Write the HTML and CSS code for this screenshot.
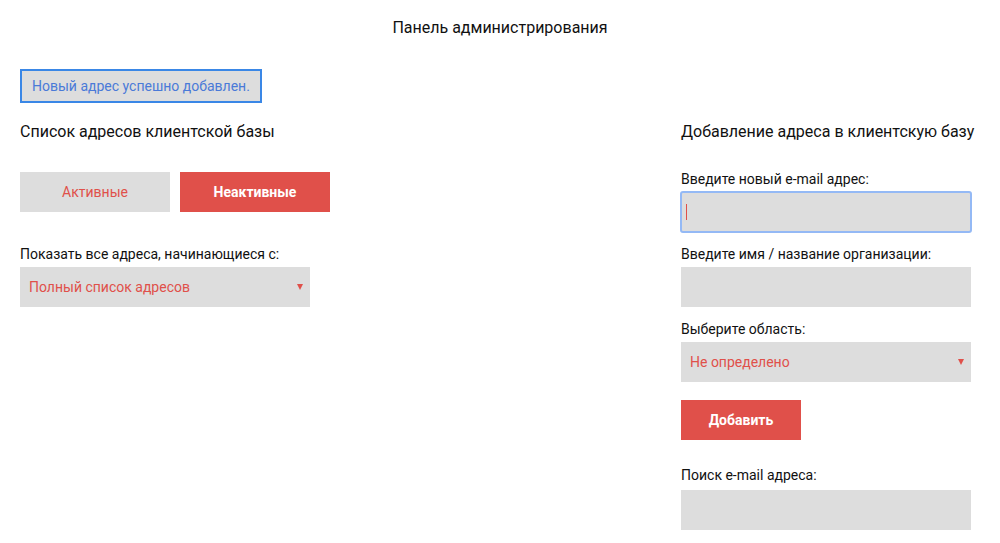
FILE: index.html
```html
<!DOCTYPE html>
<html lang="ru">
<head>
<meta charset="utf-8">
<title>Панель администрирования</title>
<link rel="stylesheet" href="styles.css">
</head>
<body>
<div class="page">
  <h1 class="title">Панель администрирования</h1>
  <div class="alert">Новый адрес успешно добавлен.</div>
  <div class="columns">
    <section class="col-left">
      <h2 class="heading">Список адресов клиентской базы</h2>
      <div class="tabs">
        <button class="tab">Активные</button>
        <button class="tab tab-active">Неактивные</button>
      </div>
      <label class="label label-filter">Показать все адреса, начинающиеся с:</label>
      <div class="select-wrap">
        <select class="select"><option>Полный список адресов</option></select>
      </div>
    </section>
    <section class="col-right">
      <h2 class="heading">Добавление адреса в клиентскую базу</h2>
      <label class="label label-first">Введите новый e-mail адрес:</label>
      <div class="field field-focused"><span class="caret"></span></div>
      <label class="label">Введите имя / название организации:</label>
      <div class="field"></div>
      <label class="label">Выберите область:</label>
      <div class="select-wrap">
        <select class="select"><option>Не определено</option></select>
      </div>
      <button class="btn-add">Добавить</button>
      <label class="label label-search">Поиск e-mail адреса:</label>
      <div class="field"></div>
    </section>
  </div>
</div>
</body>
</html>
```
FILE: styles.css
```css
* { box-sizing: border-box; }
html, body { margin: 0; padding: 0; background: #fff; }
body {
  font-family: Roboto, "Liberation Sans", sans-serif;
  color: #111;
  font-size: 14px;
}
.page { padding: 0 20px; }
.title {
  margin: 0;
  padding-top: 17px;
  font-size: 16px;
  font-weight: 400;
  line-height: 22px;
  text-align: center;
}
.alert {
  display: inline-block;
  margin-top: 30px;
  height: 34px;
  padding: 0 10px;
  border: 2px solid #3a87e6;
  background: #dddddd;
  color: #4a7ad8;
  font-size: 14px;
  line-height: 30px;
}
.columns {
  display: flex;
  justify-content: space-between;
  margin-top: 18px;
}
.col-left { width: 310px; display: flex; flex-direction: column; align-items: flex-start; }
.col-right { width: 299px; display: flex; flex-direction: column; align-items: flex-start; }
.heading {
  margin: 0;
  font-size: 16px;
  font-weight: 400;
  line-height: 22px;
  white-space: nowrap;
}
.tabs { display: flex; gap: 10px; margin-top: 29px; }
.tab {
  width: 150px;
  height: 40px;
  border: 0;
  background: #dddddd;
  color: #e0504a;
  font-family: inherit;
  font-size: 14px;
  padding: 0;
}
.tab-active { background: #e0504a; color: #fff; font-weight: 700; }
.label {
  display: block;
  font-size: 14px;
  line-height: 20px;
  margin-top: 12px;
  margin-bottom: 3px;
}
.label-filter { margin-top: 32px; }
.label-first { margin-top: 26px; }
.label-search { margin-top: 25px; margin-bottom: 5px; }
.field {
  width: 290px;
  height: 40px;
  background: #dddddd;
  display: flex;
  align-items: center;
}
.field-focused {
  outline: 2px solid #94b9f5;
  outline-offset: -1px;
  border-radius: 2px;
  padding-left: 5px;
}
.caret { width: 1px; height: 16px; background: #e0504a; }
.select-wrap { position: relative; width: 290px; height: 40px; }
.select {
  appearance: none;
  -webkit-appearance: none;
  width: 100%;
  height: 40px;
  border: 0;
  border-radius: 0;
  background: #dddddd;
  color: #e0504a;
  font-family: inherit;
  font-size: 14px;
  padding: 0 0 0 9px;
  margin: 0;
}
.select-wrap::after {
  content: "";
  position: absolute;
  right: 7px;
  top: 17px;
  border-left: 3.5px solid transparent;
  border-right: 3.5px solid transparent;
  border-top: 6px solid #e0504a;
}
.btn-add {
  margin-top: 18px;
  width: 120px;
  height: 40px;
  border: 0;
  background: #e0504a;
  color: #fff;
  font-family: inherit;
  font-size: 14px;
  font-weight: 700;
  padding: 0;
}
```
